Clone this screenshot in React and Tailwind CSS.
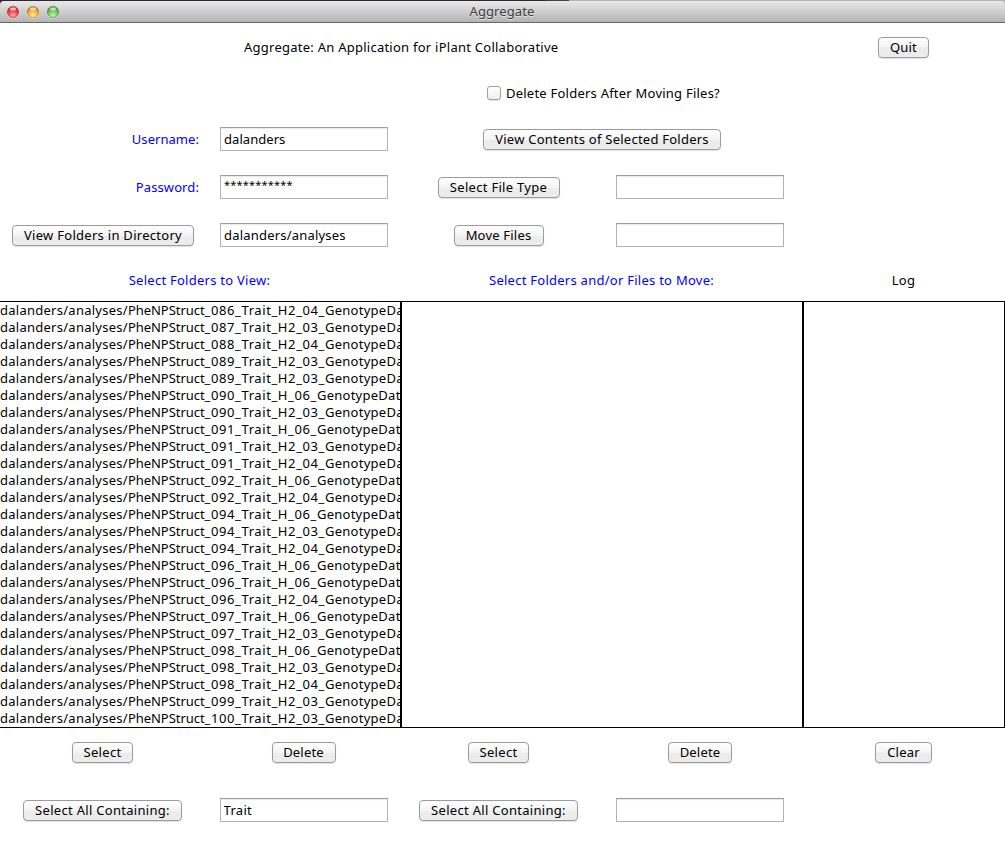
const folders = [
  "086_Trait_H2_04", "087_Trait_H2_03", "088_Trait_H2_04", "089_Trait_H2_03", "089_Trait_H2_03",
  "090_Trait_H_06", "090_Trait_H2_03", "091_Trait_H_06", "091_Trait_H2_03", "091_Trait_H2_04",
  "092_Trait_H_06", "092_Trait_H2_04", "094_Trait_H_06", "094_Trait_H2_03", "094_Trait_H2_04",
  "096_Trait_H_06", "096_Trait_H_06", "096_Trait_H2_04", "097_Trait_H_06", "097_Trait_H2_03",
  "098_Trait_H_06", "098_Trait_H2_03", "098_Trait_H2_04", "099_Trait_H2_03", "100_Trait_H2_03",
];

function Button({ children, className }) {
  return (
    <button
      className={`flex h-[21px] shrink-0 items-center justify-center whitespace-nowrap rounded-[4px] border border-[#9b9b9b] bg-linear-to-b from-white from-0% via-[#f4f4f4] via-50% to-[#ececec] to-50% leading-[19px] shadow-[0_1px_1px_rgba(0,0,0,0.12)] ${className}`}
    >
      {children}
    </button>
  );
}

function Field({ value = "", label, className = "" }) {
  return (
    <input
      aria-label={label}
      defaultValue={value}
      className={`h-6 w-[168px] border border-[#b2b2b2] border-t-[#9c9c9c] bg-white px-[3px] shadow-[inset_0_1px_1px_#e8e8e8] outline-none ${className}`}
    />
  );
}

const row = "grid grid-cols-[206px_196px_193px_210px_197px] items-center justify-items-center";
const bottomRow = "grid grid-cols-[205px_197px_193px_210px_197px] items-center justify-items-center";

function Light({ id, dark, mid, pale }) {
  return (
    <svg width="14" height="14" viewBox="0 0 14 14">
      <defs>
        <radialGradient id={id} cx="50%" cy="82%" r="75%">
          <stop offset="0" stopColor={pale} />
          <stop offset="0.55" stopColor={mid} />
          <stop offset="1" stopColor={dark} />
        </radialGradient>
      </defs>
      <ellipse cx="7" cy="7.6" rx="6.2" ry="6.1" fill="#f4f4f4" opacity="0.7" />
      <circle cx="7" cy="7" r="5.6" fill={`url(#${id})`} stroke={dark} strokeWidth="0.7" />
      <ellipse cx="7" cy="3.9" rx="3" ry="1.7" fill="#fff" opacity="0.65" />
    </svg>
  );
}

export default function App() {
  return (
    <div className="flex h-[843px] w-[1005px] flex-col overflow-hidden bg-white font-['Noto_Sans',sans-serif] text-[13px] leading-[17px] text-black">
      <div className="flex h-px shrink-0">
        <div className="w-[546px] bg-[#2c2638]" />
        <div className="w-[23px] bg-[#4b3c43]" />
        <div className="flex-1 bg-[#b4b4b4]" />
      </div>
      <div className="shrink-0 bg-linear-to-r from-[#2c2638] from-50% to-[#b4b4b4] to-50%">
        <header className="grid h-[22px] grid-cols-[1fr_auto_1fr] items-center rounded-t-[4px] border-b border-[#686868] bg-linear-to-b from-[#e9e9e9] to-[#b4b4b4]">
          <div className="flex gap-1.5 pl-1.5">
            <Light id="close" dark="#b82832" mid="#f4484e" pale="#ffb0a8" />
            <Light id="minimize" dark="#b8741f" mid="#f9b544" pale="#fff29a" />
            <Light id="zoom" dark="#3f8a3a" mid="#74cb62" pale="#c9f5a8" />
          </div>
          <h1 className="pr-px tracking-[0.1px] text-[#404040] [text-shadow:0_1px_0_#e4e4e4]">Aggregate</h1>
        </header>
      </div>

      <div className={`${row} h-[49px] shrink-0`}>
        <span className="col-span-4 w-full pl-[244px] tracking-[0.25px]">Aggregate: An Application for iPlant Collaborative</span>
        <Button className="w-[51px] tracking-[0.2px]">Quit</Button>
      </div>
      <div className="flex h-[43px] shrink-0 items-center gap-[5px] pl-[487px]">
        <span className="mb-0.5 h-3.5 w-3.5 rounded-[3px] border border-[#a0a0a0] bg-linear-to-b from-white to-[#eeeeee] shadow-[0_1px_1px_rgba(0,0,0,0.1)]" />
        <span className="tracking-[0.23px]">Delete Folders After Moving Files?</span>
      </div>
      <div className={`${row} h-12 shrink-0`}>
        <span className="justify-self-end pr-[7px] tracking-[0.05px] text-[#0000ff]">Username:</span>
        <Field label="Username" value="dalanders" className="tracking-[0.05px]" />
        <div className="col-span-2 w-full pl-[81px]">
          <Button className="w-[238px] tracking-[0.24px]">View Contents of Selected Folders</Button>
        </div>
      </div>
      <div className={`${row} h-12 shrink-0`}>
        <span className="justify-self-end pr-[7px] tracking-[0.1px] text-[#0000ff]">Password:</span>
        <Field label="Password" value="***********" className="pb-[5px] text-[11px] tracking-[0.18px]" />
        <Button className="w-[122px] tracking-[0.3px]">Select File Type</Button>
        <Field label="File type" />
      </div>
      <div className={`${row} h-12 shrink-0`}>
        <Button className="w-[182px] tracking-[0.28px]">View Folders in Directory</Button>
        <Field label="Directory" value="dalanders/analyses" className="tracking-[0.2px]" />
        <Button className="w-[90px] tracking-[0.2px]">Move Files</Button>
        <Field label="Destination" />
      </div>
      <div className="grid h-[42px] shrink-0 grid-cols-[399px_405px_199px] items-center text-center tracking-[0.26px]">
        <h2 className="text-[#0000ff]">Select Folders to View:</h2>
        <h2 className="text-[#0000ff]">Select Folders and/or Files to Move:</h2>
        <h2>Log</h2>
      </div>

      <main className="grid h-[427px] shrink-0 grid-cols-[402px_402px_201px] border-y border-black">
        <ul className="-mr-px overflow-hidden border-r-2 border-black mr-0">
          {folders.map((name, i) => (
            <li key={i} className="h-[17px] whitespace-nowrap tracking-[0.26px]">
              dalanders/analyses/<span className="tracking-[-0.04px]">PheNPStruct</span>
              <span className="tracking-[0.6px]">_{name}_</span>GenotypeData
            </li>
          ))}
        </ul>
        <div className="border-r-2 border-black" />
        <div className="border-r border-black" />
      </main>

      <div className={`${bottomRow} h-12 shrink-0`}>
        <Button className="w-[61px] tracking-[0.3px]">Select</Button>
        <Button className="w-16 tracking-[0.2px]">Delete</Button>
        <Button className="w-[61px] tracking-[0.3px]">Select</Button>
        <Button className="w-16 tracking-[0.2px]">Delete</Button>
        <Button className="w-[57px] tracking-[0.2px]">Clear</Button>
      </div>
      <div className={`${bottomRow} h-[67px] shrink-0`}>
        <Button className="mt-0.5 w-[159px] tracking-[0.3px]">Select All Containing:</Button>
        <Field label="Folders containing" value="Trait" className="tracking-[0.3px]" />
        <Button className="mt-0.5 w-[159px] tracking-[0.3px]">Select All Containing:</Button>
        <Field label="Files containing" />
      </div>
    </div>
  );
}
